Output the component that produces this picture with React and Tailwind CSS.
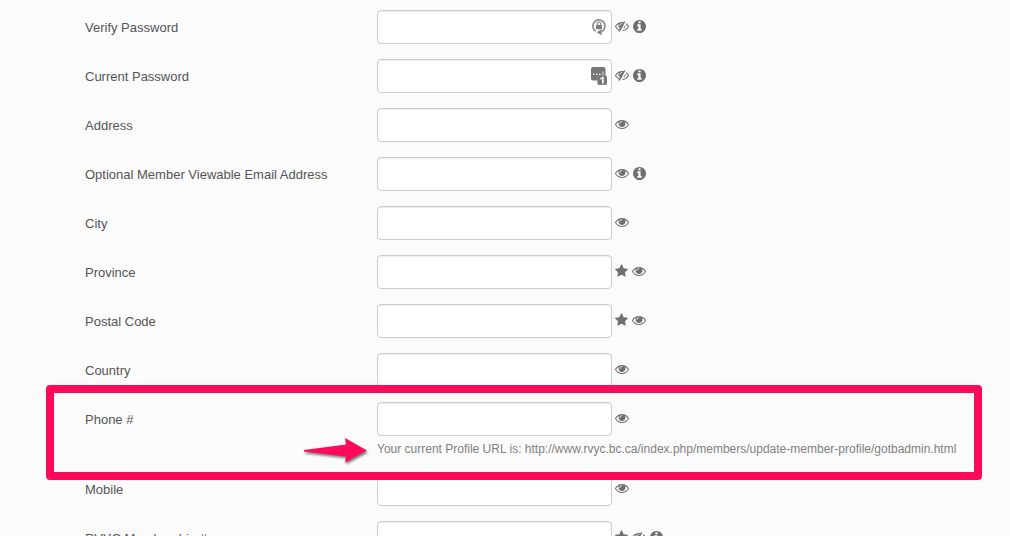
import React from "react";

const ICONS = {
  eye: {
    label: "Visible on profile",
    box: "0 0 1792 1792",
    size: "h-3.5 w-3.5",
    d: "M1664 960q-152-236-381-353 61 104 61 225 0 185-131.5 316.5t-316.5 131.5-316.5-131.5-131.5-316.5q0-121 61-225-229 117-381 353 133 205 333.5 326.5t434.5 121.5 434.5-121.5 333.5-326.5zm-720-384q0-20-14-34t-34-14q-125 0-214.5 89.5t-89.5 214.5q0 20 14 34t34 14 34-14 14-34q0-86 61-147t147-61q20 0 34-14t14-34zm848 384q0 34-20 69-140 230-376.5 368.5t-499.5 138.5-499.5-139-376.5-368q-20-35-20-69t20-69q140-229 376.5-368t499.5-139 499.5 139 376.5 368q20 35 20 69z",
  },
  hidden: {
    label: "Not visible on profile",
    box: "0 0 1792 1792",
    size: "h-3.5 w-3.5",
    d: "M555 1335l78-141q-87-63-136-159t-49-203q0-121 61-225-229 117-381 353 167 258 427 375zm389-759q0-20-14-34t-34-14q-125 0-214.5 89.5t-89.5 214.5q0 20 14 34t34 14 34-14 14-34q0-86 61-147t147-61q20 0 34-14t14-34zm363-191q0 7-1 9-106 189-316 567t-315 566l-49 89q-10 16-28 16-12 0-134-70-16-10-16-28 0-12 44-87-143-65-263.5-173t-208.5-245q-20-31-20-69t20-69q153-235 380-371t496-136q89 0 180 17l54-97q10-16 28-16 5 0 18 6t31 15.5 33 18.5 31.5 18.5 19.5 11.5q16 10 16 27zm37 447q0 139-79 253.5t-209 164.5l280-502q8 45 8 84zm448 128q0 35-20 69-39 64-109 145-150 172-347.5 267t-419.5 95l74-132q212-18 392.5-137t301.5-307q-115-179-282-294l63-112q95 64 182.5 153t144.5 178q20 34 20 69z",
  },
  info: {
    label: "More information",
    box: "128 128 1536 1536",
    size: "h-[13px] w-[13px]",
    d: "M1152 1376v-160q0-14-9-23t-23-9h-96v-512q0-14-9-23t-23-9h-320q-14 0-23 9t-9 23v160q0 14 9 23t23 9h96v320h-96q-14 0-23 9t-9 23v160q0 14 9 23t23 9h448q14 0 23-9t9-23zm-128-896v-160q0-14-9-23t-23-9h-192q-14 0-23 9t-9 23v160q0 14 9 23t23 9h192q14 0 23-9t9-23zm640 416q0 209-103 385.5t-279.5 279.5-385.5 103-385.5-103-279.5-279.5-103-385.5 103-385.5 279.5-279.5 385.5-103 385.5 103 279.5 279.5 103 385.5z",
  },
  star: {
    label: "Required",
    box: "64 0 1664 1792",
    size: "h-3.5 w-[13px]",
    d: "M1728 647q0 22-26 48l-363 354 86 500q1 7 1 20 0 21-10.5 35.5t-30.5 14.5q-19 0-40-12l-449-236-449 236q-22 12-40 12-21 0-31.5-14.5t-10.5-35.5q0-6 2-20l86-500-364-354q-25-27-25-48 0-37 56-46l502-73 225-455q19-41 49-41t49 41l225 455 502 73q56 9 56 46z",
  },
};

const FIELDS = [
  { id: "verify", label: "Verify Password", type: "password", icons: ["hidden", "info"], adornment: "generate" },
  { id: "current", label: "Current Password", type: "password", icons: ["hidden", "info"], adornment: "fill" },
  { id: "address", label: "Address", icons: ["eye"] },
  { id: "email", label: "Optional Member Viewable Email Address", icons: ["eye", "info"] },
  { id: "city", label: "City", icons: ["eye"] },
  { id: "province", label: "Province", icons: ["star", "eye"] },
  { id: "postal", label: "Postal Code", icons: ["star", "eye"] },
  { id: "country", label: "Country", icons: ["eye"] },
  {
    id: "phone",
    label: "Phone #",
    icons: ["eye"],
    help: "Your current Profile URL is: http://www.rvyc.bc.ca/index.php/members/update-member-profile/gotbadmin.html",
    highlighted: true,
  },
  { id: "mobile", label: "Mobile", icons: ["eye"] },
  { id: "membership", label: "RVYC Membership #", icons: ["star", "hidden", "info"] },
];

function StatusIcon({ name }) {
  const icon = ICONS[name];
  return (
    <svg role="img" aria-label={icon.label} viewBox={icon.box} className={icon.size} fill="currentColor">
      <path d={icon.d} />
    </svg>
  );
}

function GenerateIcon() {
  return (
    <svg viewBox="0 0 16 18" className="h-[18px] w-4" aria-hidden="true">
      <path d="M4.600 13.200A6 6.200 0 1 1 11 13.400" fill="none" stroke="#8f8f8f" strokeWidth="1.800" />
      <path d="M5.500 14.200L10.600 11.600V17.200Z" fill="#808080" />
      <path d="M6.200 7.500V6a1.800 1.800 0 0 1 3.600 0v1.500" fill="none" stroke="#8f8f8f" strokeWidth="1.200" />
      <rect x="5" y="7" width="6" height="4.200" rx="0.500" fill="#7b7b7b" />
    </svg>
  );
}

function FillIcon() {
  return (
    <svg viewBox="0 0 16 18" className="h-[18px] w-4" aria-hidden="true">
      <rect x="0" y="0" width="14.500" height="13.500" rx="2" fill="#777" />
      <path d="M2 6.500h1.500v1.500H2zM5 6.500h1.500v1.500H5zM8 6.500h1.500v1.500H8zM11.500 4.500h1v3.500h-1z" fill="#e8e8e8" />
      <rect x="6.500" y="8.500" width="9.500" height="9.500" rx="2" fill="#777" stroke="#999" strokeWidth="0.500" />
      <path d="M9.300 11.200l2-1.400h1.400v6.700H11v-4.700l-1.700.9z" fill="#fff" />
    </svg>
  );
}

function Arrow() {
  return (
    <svg viewBox="0 0 68 32" className="h-8 w-[68px] overflow-visible drop-shadow-[1px_2px_1px_rgba(0,0,0,0.5)]" aria-hidden="true">
      <path d="M1 14L43 8.500L42 2L64 14.500L42 26.500L43 20.500L1 15.500Z" fill="#ff0a5b" />
    </svg>
  );
}

function Field({ field }) {
  return (
    <div className="relative flex">
      <label htmlFor={field.id} className="w-[292px] shrink-0 pt-2 text-[13px] leading-5 text-[#555]">
        {field.label}
      </label>
      <div className="min-w-0 flex-1">
        <div className="flex items-center gap-[3px]">
          <div className="relative">
            <input
              id={field.id}
              type={field.type || "text"}
              className="block h-[34px] w-[235px] rounded border border-[#ccc] bg-white px-3 text-[13px] text-[#555] shadow-[inset_0_1px_1px_rgba(0,0,0,0.075)]"
            />
            {field.adornment && (
              <span className="absolute top-2 right-[5px]">
                {field.adornment === "generate" ? <GenerateIcon /> : <FillIcon />}
              </span>
            )}
          </div>
          <div className="flex items-center gap-1 pb-0.5 text-[#6f6f6f]">
            {field.icons.map((name) => (
              <StatusIcon key={name} name={name} />
            ))}
          </div>
        </div>
        {field.help && (
          <p className="relative pt-[5px] text-[12px] leading-4 whitespace-nowrap text-[#808080]">
            {field.help}
            <span className="absolute top-0 right-full mr-1.5">
              <Arrow />
            </span>
          </p>
        )}
      </div>
      {field.highlighted && (
        <div className="pointer-events-none absolute -top-[17px] -right-4 -bottom-[23px] -left-[39px] z-10 rounded border-8 border-[#ff0a5b]" />
      )}
    </div>
  );
}

export default function App() {
  return (
    <main className="h-screen overflow-hidden bg-[#fbfbfb] font-['Liberation_Sans',Arial,sans-serif]">
      <form className="flex flex-col gap-[15px] pt-2.5 pr-11 pl-[85px]">
        {FIELDS.map((field) => (
          <Field key={field.id} field={field} />
        ))}
      </form>
    </main>
  );
}
